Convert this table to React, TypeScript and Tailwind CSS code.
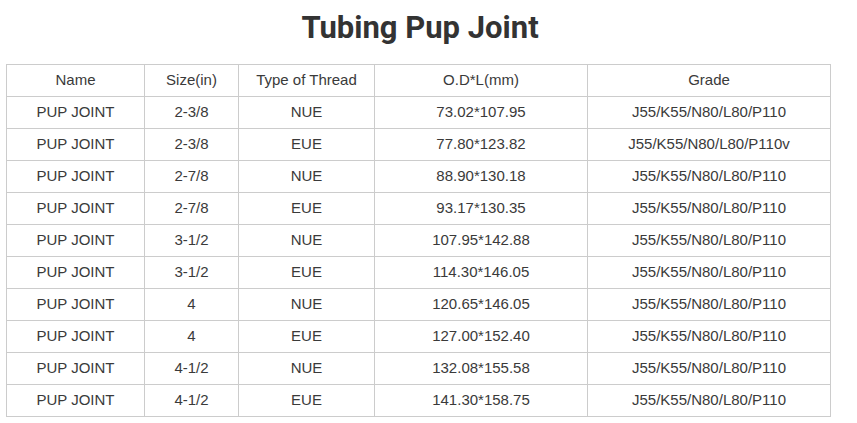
const rows = [
  ["PUP JOINT", "2-3/8", "NUE", "73.02*107.95", "J55/K55/N80/L80/P110"],
  ["PUP JOINT", "2-3/8", "EUE", "77.80*123.82", "J55/K55/N80/L80/P110v"],
  ["PUP JOINT", "2-7/8", "NUE", "88.90*130.18", "J55/K55/N80/L80/P110"],
  ["PUP JOINT", "2-7/8", "EUE", "93.17*130.35", "J55/K55/N80/L80/P110"],
  ["PUP JOINT", "3-1/2", "NUE", "107.95*142.88", "J55/K55/N80/L80/P110"],
  ["PUP JOINT", "3-1/2", "EUE", "114.30*146.05", "J55/K55/N80/L80/P110"],
  ["PUP JOINT", "4", "NUE", "120.65*146.05", "J55/K55/N80/L80/P110"],
  ["PUP JOINT", "4", "EUE", "127.00*152.40", "J55/K55/N80/L80/P110"],
  ["PUP JOINT", "4-1/2", "NUE", "132.08*155.58", "J55/K55/N80/L80/P110"],
  ["PUP JOINT", "4-1/2", "EUE", "141.30*158.75", "J55/K55/N80/L80/P110"],
];

const headers = ["Name", "Size(in)", "Type of Thread", "O.D*L(mm)", "Grade"];
const widths = ["w-[138px]", "w-[94px]", "w-[136px]", "w-[213px]", "w-[243px]"];

const App = () => {
  return (
    <div className="w-[857px] h-[423px] bg-white overflow-hidden">
      {/* Title */}
      <h1 className="pt-[8px] pr-[17px] h-[48px] mb-[16px] text-center text-[31px] leading-[40px] font-bold text-[#333] font-['Roboto',sans-serif]">
        Tubing Pup Joint
      </h1>

      {/* Table */}
      <table className="ml-[6px] w-[825px] table-fixed border-collapse text-[15px] text-[#3a3a3a] font-['Liberation_Sans',Arial,sans-serif]">
        <thead>
          <tr>
            {headers.map((h, i) => (
              <th
                key={h}
                className={`${widths[i]} h-[32px] p-0 font-normal text-center border border-[#ccc]`}
              >
                {h}
              </th>
            ))}
          </tr>
        </thead>
        <tbody>
          {rows.map((row, r) => (
            <tr key={r}>
              {row.map((cell, c) => (
                <td key={c} className="h-[32px] p-0 text-center border border-[#ccc]">
                  {cell}
                </td>
              ))}
            </tr>
          ))}
        </tbody>
      </table>
    </div>
  );
};

export default App;
